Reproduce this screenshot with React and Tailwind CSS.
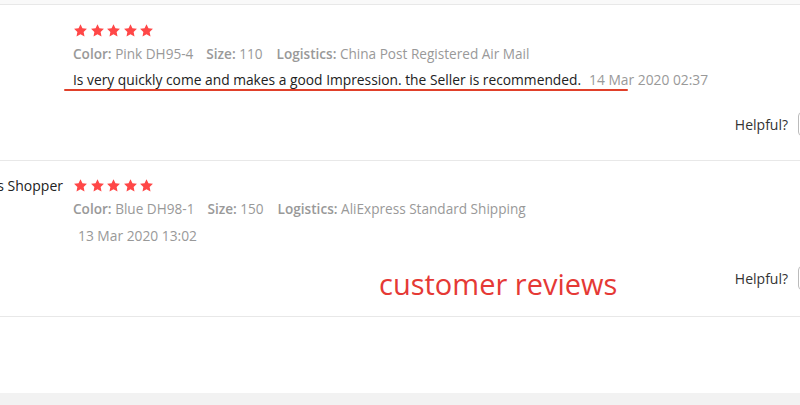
import React from 'react'

const Star = () => (
  <svg width="15" height="15" viewBox="0 0 24 24" className="fill-[#ff4747]">
    <path d="M12 1.8l3.1 6.6 7.2.9-5.3 5 1.4 7.1L12 17.9l-6.4 3.5 1.4-7.1-5.3-5 7.2-.9z" />
  </svg>
)

const Stars = () => (
  <div className="flex items-center gap-[1.5px] h-6">
    {[0, 1, 2, 3, 4].map(i => <Star key={i} />)}
  </div>
)

const Meta = ({ color, size, logistics }) => (
  <div className="h-6 flex items-center text-[13.6px] text-[#999] whitespace-nowrap">
    <span className="font-semibold">Color:</span>&nbsp;{color}
    <span className="font-semibold ml-[13px]">Size:</span>&nbsp;{size}
    <span className="font-semibold ml-[14px]">Logistics:</span>&nbsp;{logistics}
  </div>
)

const Helpful = () => (
  <div className="flex items-center justify-end h-6 whitespace-nowrap -mr-[68px]">
    <span className="text-[14px] text-[#333]">Helpful?</span>
    <div className="ml-[10px] w-[70px] h-[24px] border border-[#bbb] rounded-sm" />
  </div>
)

export default function App() {
  return (
    <div className="relative w-[800px] h-[405px] overflow-hidden bg-white font-['Open_Sans',sans-serif]">
      <div className="h-[5px] bg-[#f9f9f9] border-b border-[#e8e8e8]" />

      {/* review 1 */}
      <div className="flex pt-[13px] pb-[24px] border-b border-[#e8e8e8]">
        <div className="w-[73px] shrink-0" />
        <div className="flex-1 min-w-0">
          <Stars />
          <Meta color="Pink DH95-4" size="110" logistics="China Post Registered Air Mail" />
          <div className="h-6 mt-[2px] flex items-center text-[13.8px] text-[#222] whitespace-nowrap">
            Is very quickly come and makes a good Impression. the Seller is recommended.
            <span className="ml-[8px] text-[#999]">14 Mar 2020 02:37</span>
          </div>
          <div className="mt-[20px]">
            <Helpful />
          </div>
        </div>
      </div>

      {/* review 2 */}
      <div className="flex pt-[12px] pb-[26px] border-b border-[#e8e8e8]">
        <div className="w-[73px] shrink-0 flex justify-end overflow-hidden pr-[10px]">
          <span className="h-6 flex items-center text-[14px] text-[#222] whitespace-nowrap shrink-0">AliExpress Shopper</span>
        </div>
        <div className="flex-1 min-w-0">
          <Stars />
          <Meta color="Blue DH98-1" size="150" logistics="AliExpress Standard Shipping" />
          <div className="h-6 mt-[3px] pl-[5px] flex items-center text-[13.8px] text-[#999]">13 Mar 2020 13:02</div>
          <div className="mt-[18px]">
            <Helpful />
          </div>
        </div>
      </div>

      <div className="absolute left-0 right-0 bottom-0 h-[12px] bg-[#f2f2f2]" />

      {/* annotations */}
      <div className="absolute left-[64px] top-[89px] w-[564px] h-[2px] bg-[#e0402a] rounded-full" />
      <div className="absolute left-[379px] top-[264px] text-[29px] leading-[40px] text-[#e53935]">customer reviews</div>
    </div>
  )
}
